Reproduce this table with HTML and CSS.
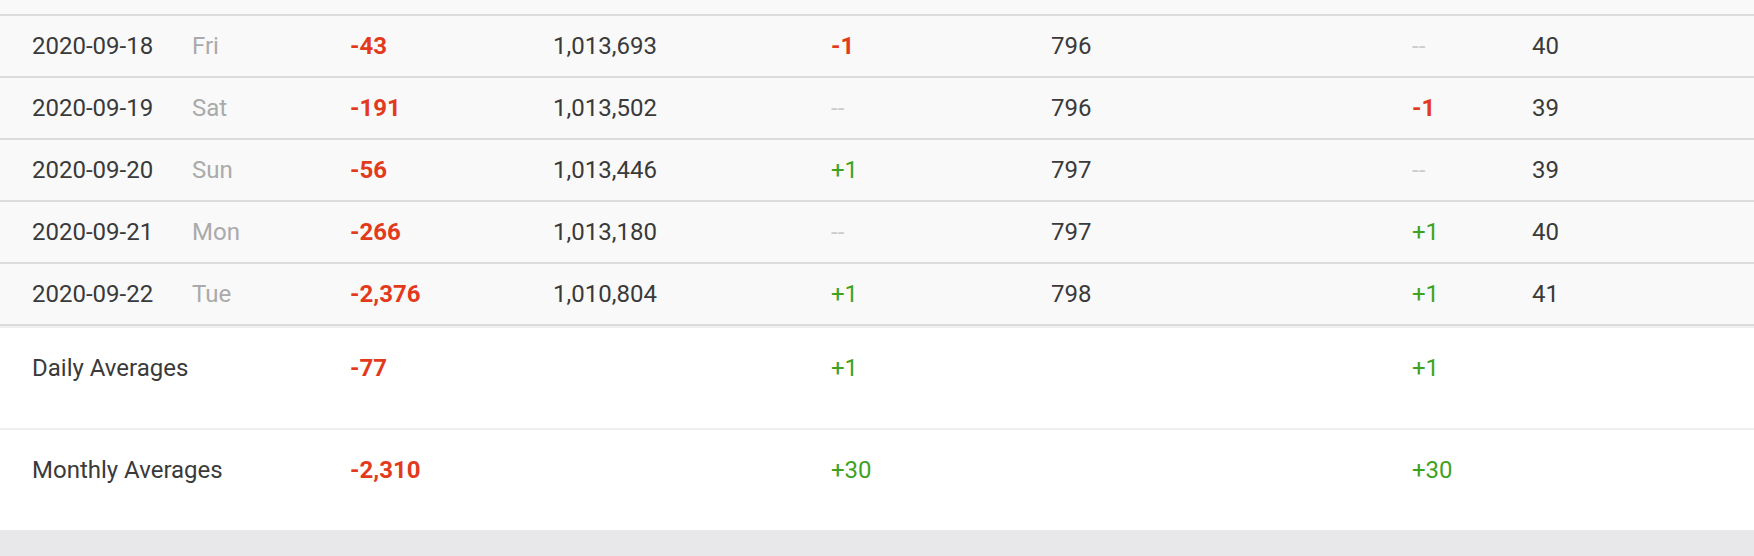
FILE: index.html
```html
<!DOCTYPE html>
<html lang="en">
<head>
    <meta charset="UTF-8">
    <meta name="viewport" content="width=device-width, initial-scale=1.0">
    <title>Daily Stats</title>
    <link rel="stylesheet" href="styles.css">
</head>
<body>

    <div class="panel">
        <div class="scroll-edge"></div>

        <table class="stats">
            <colgroup>
                <col class="c-date">
                <col class="c-day">
                <col class="c-diff">
                <col class="c-total">
                <col class="c-diff2">
                <col class="c-count">
                <col class="c-diff3">
                <col>
            </colgroup>
            <tbody>
                <tr>
                    <td class="date">2020-09-18</td>
                    <td class="day">Fri</td>
                    <td class="down">-43</td>
                    <td>1,013,693</td>
                    <td class="down">-1</td>
                    <td>796</td>
                    <td class="none">--</td>
                    <td>40</td>
                </tr>
                <tr>
                    <td class="date">2020-09-19</td>
                    <td class="day">Sat</td>
                    <td class="down">-191</td>
                    <td>1,013,502</td>
                    <td class="none">--</td>
                    <td>796</td>
                    <td class="down">-1</td>
                    <td>39</td>
                </tr>
                <tr>
                    <td class="date">2020-09-20</td>
                    <td class="day">Sun</td>
                    <td class="down">-56</td>
                    <td>1,013,446</td>
                    <td class="up">+1</td>
                    <td>797</td>
                    <td class="none">--</td>
                    <td>39</td>
                </tr>
                <tr>
                    <td class="date">2020-09-21</td>
                    <td class="day">Mon</td>
                    <td class="down">-266</td>
                    <td>1,013,180</td>
                    <td class="none">--</td>
                    <td>797</td>
                    <td class="up">+1</td>
                    <td>40</td>
                </tr>
                <tr>
                    <td class="date">2020-09-22</td>
                    <td class="day">Tue</td>
                    <td class="down">-2,376</td>
                    <td>1,010,804</td>
                    <td class="up">+1</td>
                    <td>798</td>
                    <td class="up">+1</td>
                    <td>41</td>
                </tr>
            </tbody>
            <tfoot>
                <tr>
                    <td class="date" colspan="2">Daily Averages</td>
                    <td class="down">-77</td>
                    <td></td>
                    <td class="up">+1</td>
                    <td></td>
                    <td class="up">+1</td>
                    <td></td>
                </tr>
                <tr>
                    <td class="date" colspan="2">Monthly Averages</td>
                    <td class="down">-2,310</td>
                    <td></td>
                    <td class="up">+30</td>
                    <td></td>
                    <td class="up">+30</td>
                    <td></td>
                </tr>
            </tfoot>
        </table>
    </div>

</body>
</html>
```

FILE: styles.css
```css
/* Page */
body {
    margin: 0;
    background: #e8e8ea;
    font-family: 'Roboto', 'Liberation Sans', sans-serif;
    font-size: 24px;
    color: #3a3a3a;
}

.panel {
    background: #fff;
}

/* Bottom of the row scrolled out of view */
.scroll-edge {
    height: 14px;
    background: #f9f9f9;
    border-bottom: 2px solid #dcdcdc;
}

/* Table */
.stats {
    width: 100%;
    table-layout: fixed;
    border-collapse: separate;
    border-spacing: 0;
}

.c-date { width: 192px; }
.c-day { width: 158px; }
.c-diff { width: 203px; }
.c-total { width: 278px; }
.c-diff2 { width: 220px; }
.c-count { width: 361px; }
.c-diff3 { width: 120px; }

.stats td {
    padding: 0;
    line-height: 28px;
    white-space: nowrap;
}

.stats tbody td {
    height: 60px;
    background: #f9f9f9;
    border-bottom: 2px solid #dcdcdc;
    vertical-align: middle;
}

.stats tfoot td {
    height: 102px;
    box-sizing: border-box;
    padding-top: 26px;
    background: #fff;
    border-top: 2px solid #efefef;
    vertical-align: top;
}

.stats td.date {
    padding-left: 32px;
}

.day {
    color: #aaa;
}

/* Changes */
.down {
    color: #e23a1c;
    font-weight: 700;
}

.up {
    color: #3fa21f;
}

.none {
    color: #ccc;
}
```
